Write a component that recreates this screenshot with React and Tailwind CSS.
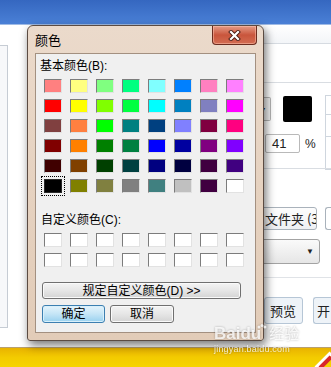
import React from "react";
import clsx from "clsx";

const basicColors = [
  "#ff8080", "#ffff80", "#80ff80", "#00ff80", "#80ffff", "#0080ff", "#ff80c0", "#ff80ff",
  "#ff0000", "#ffff00", "#80ff00", "#00ff40", "#00ffff", "#0080c0", "#8080c0", "#ff00ff",
  "#804040", "#ff8040", "#00ff00", "#008080", "#004080", "#8080ff", "#800040", "#ff0080",
  "#800000", "#ff8000", "#008000", "#008040", "#0000ff", "#0000a0", "#800080", "#8000ff",
  "#400000", "#804000", "#004000", "#004040", "#000080", "#000040", "#400040", "#400080",
  "#000000", "#808000", "#808040", "#808080", "#408080", "#c0c0c0", "#400040", "#ffffff",
];

const customColors = Array(16).fill("#ffffff");

function Swatch({ color, selected }) {
  return (
    <div
      className={clsx(
        "w-[18px] h-[14px] border",
        selected
          ? "border-[#2a2a2a] shadow-[0_0_0_1px_#f0f0f0] outline-1 outline-dotted outline-black outline-offset-[2px]"
          : "border-t-[#7c7c7c] border-l-[#7c7c7c] border-r-[#e2e2e2] border-b-[#e2e2e2]"
      )}
      style={{ backgroundColor: color }}
    />
  );
}

function WinButton({ children, primary, className }) {
  return (
    <div
      className={clsx(
        "flex items-center justify-center rounded-[3px] border text-[12px] text-black",
        primary
          ? "border-[#3c7fb1] bg-gradient-to-b from-[#e5f4fc] via-[#c4e5f6] to-[#98d1ef] shadow-[inset_0_0_0_1px_#d8f0fb]"
          : "border-[#707070] bg-gradient-to-b from-[#f4f4f4] via-[#e6e6e6] to-[#d4d4d4] shadow-[inset_0_0_0_1px_#fafafa]",
        className
      )}
    >
      {children}
    </div>
  );
}

function ColorDialog() {
  return (
    <div className="absolute left-[27px] top-[25px] w-[237px] h-[316px] flex flex-col rounded-t-[6px] rounded-b-[3px] border border-[#5b4b42] bg-gradient-to-b from-[#ebdacb] via-[#e6d2c0] to-[#e2ccb8] shadow-[2px_4px_10px_rgba(0,0,0,0.55)]">
      {/* title bar */}
      <div className="h-[27px] flex items-start justify-between">
        <span className="pl-[7px] pt-[7px] text-[13px] leading-[16px] text-black">颜色</span>
        <div className="mr-[6px] w-[45px] h-[19px] flex items-center justify-center rounded-b-[4px] border border-t-0 border-[#6b2c1f] bg-gradient-to-b from-[#e49b86] via-[#c9553c] to-[#d36d52] shadow-[inset_0_0_0_1px_rgba(255,200,180,0.5)]">
          <svg width="13" height="11" viewBox="0 0 13 11">
            <path d="M3 2 L10 9 M10 2 L3 9" stroke="#4a1c14" strokeWidth="4" strokeLinecap="square" />
            <path d="M3 2 L10 9 M10 2 L3 9" stroke="#ffffff" strokeWidth="2.2" strokeLinecap="square" />
          </svg>
        </div>
      </div>

      {/* client area */}
      <div className="flex-1 mx-[7px] mb-[7px] border border-[#a39080] bg-[#f0f0f0] flex flex-col">
        <div className="pl-[4px] pt-[5px] text-[12px] leading-[14px] text-black">基本颜色(B):</div>
        <div className="ml-[8px] mt-[6px] grid grid-cols-[repeat(8,18px)] gap-x-[8px] gap-y-[6px]">
          {basicColors.map((c, i) => (
            <Swatch key={i} color={c} selected={i === 40} />
          ))}
        </div>
        <div className="pl-[5px] mt-[20px] text-[12px] leading-[14px] text-black">自定义颜色(C):</div>
        <div className="ml-[8px] mt-[6px] grid grid-cols-[repeat(8,18px)] gap-x-[8px] gap-y-[6px]">
          {customColors.map((c, i) => (
            <Swatch key={i} color={c} />
          ))}
        </div>
        <WinButton className="ml-[6px] mt-[15px] w-[199px] h-[17px]">规定自定义颜色(D) &gt;&gt;</WinButton>
        <div className="ml-[6px] mt-[6px] flex gap-[5px]">
          <WinButton primary className="w-[63px] h-[18px]">确定</WinButton>
          <WinButton className="w-[64px] h-[18px]">取消</WinButton>
        </div>
      </div>
    </div>
  );
}

function BackgroundWindow() {
  return (
    <div className="flex flex-col h-full">
      <div className="h-[25px] shrink-0 bg-gradient-to-b from-[#3567c0] to-[#4a80d6] border-b border-[#9fbbe6]" />
      <div className="flex-1 flex bg-white">
        {/* left panel edge */}
        <div className="w-[250px] shrink-0 pt-[20px]">
          <div className="w-[8px] h-[283px] border border-l-0 border-[#c6ccd4] bg-[#f7f8fa]" />
        </div>
        {/* right panel */}
        <div className="w-[81px] shrink-0 flex flex-col text-[13px] text-[#222]">
          <div className="h-[19px] shrink-0 border-b border-[#d6dbe1] bg-gradient-to-b from-[#ffffff] to-[#f3f5f8]" />
          <div className="h-[39px] shrink-0 border-b border-[#d9dde2]" />
          <div className="mt-[13px] h-[26px] shrink-0 flex items-start">
            <div className="mt-[1px] w-[22px] h-[24px] flex items-center justify-end pr-[4px] border border-l-0 border-[#b5b5b5] rounded-r-[2px] bg-[#f2f2f2]">
              <span className="text-[7px] leading-none">▼</span>
            </div>
            <div className="ml-[12px] w-[30px] h-[26px] rounded-[2px] bg-black" />
            <div className="ml-[13px] -mt-[1px] flex flex-col w-[6px] border border-r-0 border-[#cfd6de]">
              <div className="h-[19px] border-b border-[#cfd6de]" />
              <div className="h-[22px] border-b border-[#cfd6de]" />
              <div className="h-[32px]" />
            </div>
          </div>
          <div className="mt-[12px] ml-[15px] h-[19px] shrink-0 flex items-center">
            <div className="w-[35px] h-[19px] rounded-[2px] border border-[#b9b9b9] text-[13px] leading-[17px] pl-[6px]">41</div>
            <span className="ml-[5px] text-[12px]">%</span>
          </div>
          <div className="mt-[15px] shrink-0 border-t border-[#d9dde2]" />
          <div className="mt-[38px] shrink-0 flex">
            <div className="ml-[6px] w-[65px] h-[23px] overflow-hidden whitespace-nowrap rounded-[3px] border border-[#a9b2bb] bg-gradient-to-b from-[#fdfdfd] to-[#eef0f3] pl-[8px] text-[13px] leading-[21px] font-['Noto_Sans_CJK_SC',sans-serif]">
              文件夹 (3)
            </div>
            <div className="ml-[8px] w-[6px] h-[23px] rounded-l-[3px] border border-r-0 border-[#a9b2bb]" />
          </div>
          <div className="mt-[9px] w-[70px] h-[25px] shrink-0 flex items-center justify-end pr-[5px] rounded-[3px] border border-[#a3a3a3] bg-gradient-to-b from-[#fafafa] to-[#e6e6e6]">
            <span className="text-[8px] leading-none">▼</span>
          </div>
          <div className="mt-[13px] shrink-0 border-t border-[#e0e3e7]" />
          <div className="mt-[19px] shrink-0 flex items-start">
            <div className="ml-[14px] w-[44px] h-[27px] rounded-[3px] border border-[#b6c6d6] bg-[#eef3f8] pl-[5px] text-[13px] leading-[25px] font-['Noto_Sans_CJK_SC',sans-serif]">
              预览
            </div>
            <div className="ml-[10px] w-[20px] h-[27px] rounded-l-[3px] border border-r-0 border-[#b6c6d6] bg-[#eef3f8] pl-[3px] text-[13px] leading-[25px] font-['Noto_Sans_CJK_SC',sans-serif]">
              开
            </div>
          </div>
        </div>
      </div>
      <div className="h-[20px] shrink-0 border-t border-[#b8a070] bg-gradient-to-b from-[#e9b300] via-[#f3cb00] to-[#f6d400] flex justify-end">
        <svg width="24" height="20" viewBox="0 0 24 20">
          <path d="M9 20 L24 5" stroke="#ffffff" strokeWidth="4" />
          <path d="M13 20 L24 9" stroke="#d8262a" strokeWidth="4" />
        </svg>
      </div>
    </div>
  );
}

function Watermark() {
  return (
    <div className="absolute left-[214px] top-[324px] flex flex-col items-start text-white/80 drop-shadow-[0_0_1px_rgba(0,0,0,0.35)] font-['Liberation_Sans','Noto_Sans_CJK_SC',sans-serif]">
      <div className="flex items-center text-[17px] font-bold leading-[20px]">
        <span>Bai</span>
        <span>du</span>
        <svg width="10" height="12" viewBox="0 0 10 12" className="-ml-[4px] -mt-[8px]">
          <circle cx="2" cy="3" r="1.5" fill="currentColor" />
          <circle cx="5" cy="1.6" r="1.5" fill="currentColor" />
          <circle cx="8" cy="3" r="1.5" fill="currentColor" />
        </svg>
        <span className="ml-[2px] text-[15px] font-normal">经验</span>
      </div>
      <div className="text-[9px] leading-[11px] tracking-[0.2px]">jingyan.baidu.com</div>
    </div>
  );
}

export default function App() {
  return (
    <div className="relative w-[331px] h-[367px] overflow-hidden bg-white font-['Liberation_Sans','Noto_Sans_CJK_SC',sans-serif]">
      <BackgroundWindow />
      <ColorDialog />
      <Watermark />
    </div>
  );
}
